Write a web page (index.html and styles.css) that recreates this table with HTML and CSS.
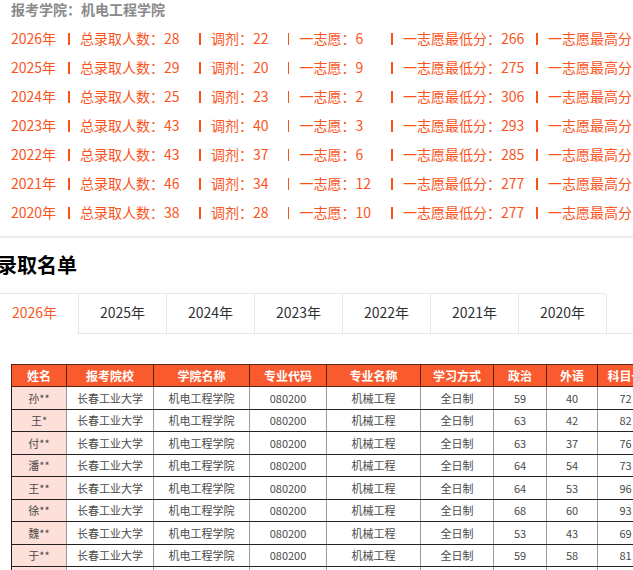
FILE: index.html
```html
<!DOCTYPE html>
<html lang="zh-CN">
<head>
<meta charset="utf-8">
<title>录取名单</title>
<link rel="stylesheet" href="styles.css">
</head>
<body>
<div class="page">
  <div class="college">报考学院：机电工程学院</div>
  <div class="stats">
    <div class="stat-row"><span class="c">2026年</span><span class="c">总录取人数：28</span><span class="c">调剂：22</span><span class="c">一志愿：6</span><span class="c">一志愿最低分：266</span><span class="c">一志愿最高分</span></div>
    <div class="stat-row"><span class="c">2025年</span><span class="c">总录取人数：29</span><span class="c">调剂：20</span><span class="c">一志愿：9</span><span class="c">一志愿最低分：275</span><span class="c">一志愿最高分</span></div>
    <div class="stat-row"><span class="c">2024年</span><span class="c">总录取人数：25</span><span class="c">调剂：23</span><span class="c">一志愿：2</span><span class="c">一志愿最低分：306</span><span class="c">一志愿最高分</span></div>
    <div class="stat-row"><span class="c">2023年</span><span class="c">总录取人数：43</span><span class="c">调剂：40</span><span class="c">一志愿：3</span><span class="c">一志愿最低分：293</span><span class="c">一志愿最高分</span></div>
    <div class="stat-row"><span class="c">2022年</span><span class="c">总录取人数：43</span><span class="c">调剂：37</span><span class="c">一志愿：6</span><span class="c">一志愿最低分：285</span><span class="c">一志愿最高分</span></div>
    <div class="stat-row"><span class="c">2021年</span><span class="c">总录取人数：46</span><span class="c">调剂：34</span><span class="c">一志愿：12</span><span class="c">一志愿最低分：277</span><span class="c">一志愿最高分</span></div>
    <div class="stat-row"><span class="c">2020年</span><span class="c">总录取人数：38</span><span class="c">调剂：28</span><span class="c">一志愿：10</span><span class="c">一志愿最低分：277</span><span class="c">一志愿最高分</span></div>
  </div>
  <div class="divider"></div>
  <h2 class="heading">录取名单</h2>
  <div class="tabs">
    <div class="tab-nav">
      <div class="tab active">2026年</div>
      <div class="tab">2025年</div>
      <div class="tab">2024年</div>
      <div class="tab">2023年</div>
      <div class="tab">2022年</div>
      <div class="tab">2021年</div>
      <div class="tab">2020年</div>
    </div>
  </div>
  <table class="list">
    <colgroup>
      <col class="w1"><col class="w2"><col class="w3"><col class="w4"><col class="w5"><col class="w6"><col class="w7"><col class="w8"><col class="w9">
    </colgroup>
    <thead>
      <tr><th>姓名</th><th>报考院校</th><th>学院名称</th><th>专业代码</th><th>专业名称</th><th>学习方式</th><th>政治</th><th>外语</th><th>科目一</th></tr>
    </thead>
    <tbody>
      <tr><td class="name">孙**</td><td>长春工业大学</td><td>机电工程学院</td><td>080200</td><td>机械工程</td><td>全日制</td><td>59</td><td>40</td><td>72</td></tr>
      <tr><td class="name">王*</td><td>长春工业大学</td><td>机电工程学院</td><td>080200</td><td>机械工程</td><td>全日制</td><td>63</td><td>42</td><td>82</td></tr>
      <tr><td class="name">付**</td><td>长春工业大学</td><td>机电工程学院</td><td>080200</td><td>机械工程</td><td>全日制</td><td>63</td><td>37</td><td>76</td></tr>
      <tr><td class="name">潘**</td><td>长春工业大学</td><td>机电工程学院</td><td>080200</td><td>机械工程</td><td>全日制</td><td>64</td><td>54</td><td>73</td></tr>
      <tr><td class="name">王**</td><td>长春工业大学</td><td>机电工程学院</td><td>080200</td><td>机械工程</td><td>全日制</td><td>64</td><td>53</td><td>96</td></tr>
      <tr><td class="name">徐**</td><td>长春工业大学</td><td>机电工程学院</td><td>080200</td><td>机械工程</td><td>全日制</td><td>68</td><td>60</td><td>93</td></tr>
      <tr><td class="name">魏**</td><td>长春工业大学</td><td>机电工程学院</td><td>080200</td><td>机械工程</td><td>全日制</td><td>53</td><td>43</td><td>69</td></tr>
      <tr><td class="name">于**</td><td>长春工业大学</td><td>机电工程学院</td><td>080200</td><td>机械工程</td><td>全日制</td><td>59</td><td>58</td><td>81</td></tr>
      <tr><td class="name"></td><td></td><td></td><td></td><td></td><td></td><td></td><td></td><td></td></tr>
    </tbody>
  </table>
</div>
</body>
</html>
```

FILE: styles.css
```css
html, body {
  margin: 0;
  padding: 0;
  background: #fff;
  overflow: hidden;
}
body {
  width: 633px;
  height: 570px;
  font-family: "Noto Sans CJK SC", "Noto Sans", sans-serif;
  color: #303133;
}
.page {
  width: 633px;
}
.college {
  padding-left: 11px;
  font-size: 14px;
  line-height: 18px;
  font-weight: bold;
  color: #8a8a8a;
}
.stats {
  margin-top: 6px;
  padding-left: 11px;
}
.stat-row {
  display: grid;
  grid-template-columns: 57px 131px 88.5px 103.5px 145px max-content;
  height: 29px;
  line-height: 29px;
  font-size: 14px;
  color: #fa541c;
  white-space: nowrap;
}
.stat-row .c + .c::before {
  content: "";
  display: inline-block;
  width: 1.5px;
  height: 12px;
  margin-right: 10.5px;
  background: #fa541c;
  vertical-align: -1px;
}
.divider {
  margin-top: 9px;
  height: 2px;
  background: #ececec;
}
.heading {
  margin: 13px 0 0 -3px;
  font-size: 20px;
  line-height: 28px;
  font-weight: bold;
  color: #000;
}
.tabs {
  margin-top: 14px;
  border-bottom: 1px solid #e4e7ed;
}
.tab-nav {
  display: flex;
  width: max-content;
  margin-left: -10px;
  margin-bottom: -1px;
  border: 1px solid #e4e7ed;
  border-bottom: none;
  border-radius: 4px 4px 0 0;
}
.tab {
  width: 87px;
  height: 39px;
  line-height: 37px;
  text-align: center;
  font-size: 14px;
  color: #303133;
  border-left: 1px solid #e4e7ed;
  border-bottom: 1px solid transparent;
}
.tab:first-child {
  border-left: none;
}
.tab.active {
  color: #fa5a1e;
  border-bottom-color: #fff;
}
.list {
  margin: 30px 0 0 11px;
  border-collapse: collapse;
  table-layout: fixed;
  width: 642px;
  border: 1px solid #1a1a1a;
}
.w1 { width: 55px; }
.w2 { width: 87px; }
.w3 { width: 96px; }
.w4 { width: 77px; }
.w5 { width: 94px; }
.w6 { width: 73px; }
.w7 { width: 53px; }
.w8 { width: 51px; }
.w9 { width: 56px; }
.list th {
  height: 21px;
  padding: 0;
  background: #f95b2f;
  color: #fff;
  font-size: 12px;
  font-weight: bold;
  text-align: center;
  border: 1px solid #5a2414;
  white-space: nowrap;
}
.list td {
  height: 21.5px;
  padding: 0;
  font-size: 11px;
  color: #4a4a4a;
  text-align: center;
  border-top: 1px solid #222;
  border-bottom: 1px solid #222;
  border-left: 1px solid #9a9a9a;
  border-right: 1px solid #9a9a9a;
  white-space: nowrap;
}
.list td.name {
  background: #fde0d9;
  border-left-color: #1a1a1a;
}
```
